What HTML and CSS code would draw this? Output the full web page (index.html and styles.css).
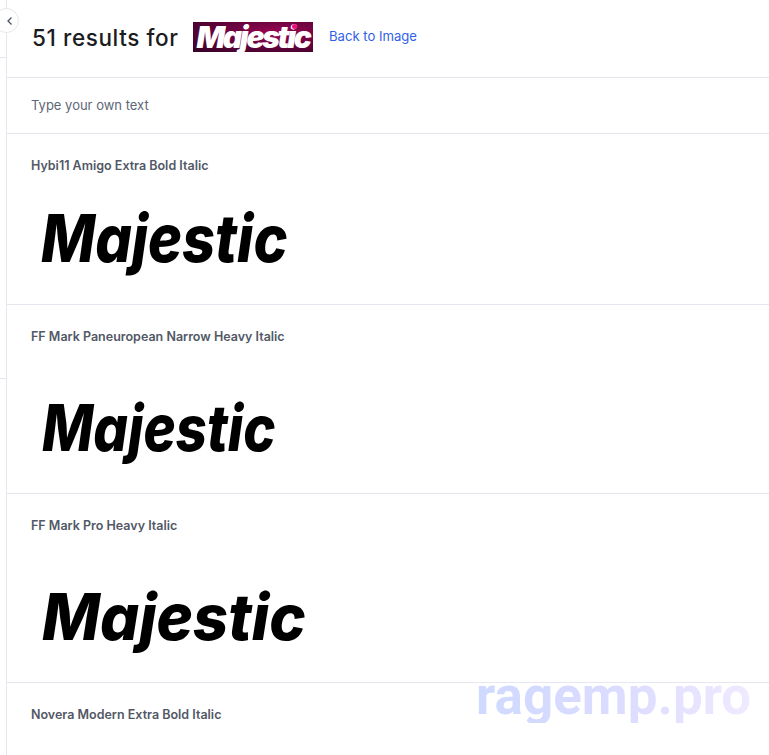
FILE: index.html
```html
<!DOCTYPE html>
<html lang="en">
<head>
<meta charset="utf-8">
<title>51 results</title>
<link rel="stylesheet" href="styles.css">
</head>
<body>
<div class="page">
  <aside class="rail">
    <div class="rail-line rail-line-a"></div>
    <div class="rail-line rail-line-b"></div>
  </aside>
  <main class="main">
    <header class="head">
      <h1 class="title">51 results for</h1>
      <div class="logo"><span class="logo-text">Majestic</span><i class="logo-dot"></i></div>
      <a class="back" href="#">Back to Image</a>
    </header>
    <div class="own">Type your own text</div>
    <section class="row row-a">
      <h2 class="name">Hybi11 Amigo Extra Bold Italic</h2>
      <div class="sample sample-a">Majestic</div>
    </section>
    <section class="row row-b">
      <h2 class="name">FF Mark Paneuropean Narrow Heavy Italic</h2>
      <div class="sample sample-b">Majestic</div>
    </section>
    <section class="row row-b">
      <h2 class="name">FF Mark Pro Heavy Italic</h2>
      <div class="sample sample-c">Majestic</div>
    </section>
    <section class="row row-last">
      <h2 class="name">Novera Modern Extra Bold Italic</h2>
    </section>
  </main>
</div>
<button class="toggle" aria-label="Collapse">
  <svg viewBox="0 0 10 10" width="10" height="10"><path d="M6.5 1.5 3 5l3.5 3.5" fill="none" stroke="#4b5563" stroke-width="1.3"/></svg>
</button>
<div class="mark">ragemp.pro</div>
</body>
</html>
```
FILE: styles.css
```css
* { box-sizing: border-box; }
html, body { margin: 0; height: 755px; overflow: hidden; background: #fff; }
body { font-family: Inter, "Liberation Sans", sans-serif; color: #1a1c21; }
.page { display: flex; height: 755px; }
.rail { width: 7px; flex: none; border-right: 1px solid #e6e7ee; position: relative; }
.rail-line { position: absolute; left: 0; width: 6px; height: 1px; background: #e6e7ee; }
.rail-line-a { top: 57px; }
.rail-line-b { top: 378px; }
.main { flex: 1; min-width: 0; }
.head { height: 78px; border-bottom: 1px solid #e6e7ee; display: flex; align-items: center; padding: 0 0 3px 25px; }
.title { margin: 2px 0 0; font-size: 22.5px; font-weight: 500; letter-spacing: 0.6px; line-height: 30px; width: 161px; flex: none; color: #1a1c21; }
.logo { width: 120px; height: 30px; flex: none; position: relative; margin-top: -1px; background: radial-gradient(ellipse at 70% 35%, #9c0650 0%, #68043e 45%, #350225 100%); display: flex; align-items: center; justify-content: center; }
.logo-text { color: #fff; font-size: 30px; font-weight: 900; font-style: italic; font-feature-settings: "cv11"; letter-spacing: -2.3px; line-height: 30px; }
.logo-dot { position: absolute; left: 99px; top: 2px; width: 5px; height: 5px; border-radius: 50%; background: #ee0a78; }
.back { margin-left: 16px; color: #2f62e8; font-size: 13.1px; text-decoration: none; margin-top: -3px; }
.own { height: 56px; border-bottom: 1px solid #e6e7ee; padding: 19px 0 0 24px; font-size: 13px; line-height: 16px; color: #5d6676; }
.row { border-bottom: 1px solid #e6e7ee; padding: 24px 0 0 24px; }
.row-a { height: 171px; }
.row-b { height: 189px; }
.row-last { border-bottom: 0; }
.name { margin: 0; font-size: 12.5px; font-weight: 600; line-height: 16px; color: #525866; }
.sample { color: #000; font-style: italic; font-weight: 800; font-feature-settings: "cv11"; white-space: nowrap; transform-origin: left center; width: 300px; }
.sample-a { font-size: 66px; line-height: 80px; margin: 24px 0 0 10px; transform: scaleX(0.87); }
.sample-b { font-size: 64px; line-height: 80px; margin: 43px 0 0 11px; transform: scaleX(0.85); }
.sample-c { font-size: 64px; line-height: 80px; margin: 43px 0 0 11px; transform: scaleX(0.96); }
.toggle { position: absolute; left: -6px; top: 8px; width: 25px; height: 25px; padding: 0 0 0 6px; border: 1px solid #e6e7ee; border-radius: 50%; background: #fff; display: flex; align-items: center; justify-content: center; }
.mark { position: absolute; left: 476px; top: 669px; font-family: Roboto, sans-serif; font-weight: 700; font-size: 53px; line-height: 54px; white-space: nowrap; background: linear-gradient(90deg, #cfd9ff 0%, #dcdcff 55%, #f0eaff 100%); -webkit-background-clip: text; background-clip: text; color: transparent; }
```
